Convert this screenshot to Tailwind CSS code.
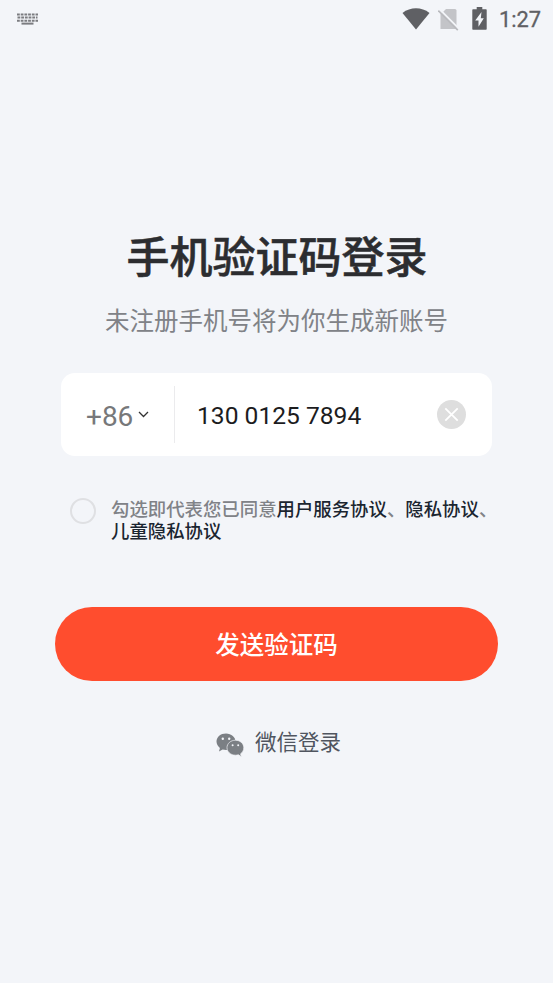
<!DOCTYPE html>
<html lang="zh-CN">
  <head>
    <meta charset="UTF-8" />
    <meta name="viewport" content="width=device-width, initial-scale=1.0" />
    <title>手机验证码登录</title>
    <script src="https://cdn.jsdelivr.net/npm/@tailwindcss/browser@4"></script>
  </head>
  <body class="min-h-screen bg-[#f3f5f9] font-['Noto_Sans_CJK_SC',sans-serif]">
    <!-- Status bar -->
    <header class="flex h-[38px] items-center justify-between pl-[17px] pr-[12px] text-[#5f6064]">
      <svg class="h-3 w-[21px]" viewBox="0 0 21 12" fill="none" stroke="#7b7c80" stroke-width="2">
        <path d="M0 1.5h21M0.5 4.6h20M0 7.7h21" stroke-dasharray="2.8 0.9" />
        <path d="M4.5 10.6h12" />
      </svg>
      <div class="flex items-center">
        <svg class="h-[22px] w-[28px]" viewBox="0 0 28 22" fill="#5f6064">
          <path d="M0.5 5C8.5-1.2 19.5-1.2 27.5 5L14 21.5z" />
        </svg>
        <svg class="ml-[8px] h-[23px] w-[21px]" viewBox="0 0 21 23">
          <path d="M8 1h9q1.500 0 1.500 1.500v18.500H2.500V6.500z" fill="#c3c4c8" />
          <path d="M1 0.800L21 20.800" stroke="#f3f5f9" stroke-width="2" />
          <path d="M0.300 2.700L19.800 22.200" stroke="#b9babe" stroke-width="1.700" />
        </svg>
        <svg class="mb-px ml-[13px] h-[23px] w-[15px]" viewBox="0 0 15 23">
          <path d="M1 2.200h3.700V0h5.600v2.200H14q0.700 0 0.700 0.700v19.200q0 0.700-0.700 0.700H1q-0.700 0-0.700-0.700V2.900q0-0.700 0.700-0.700z" fill="#5f6064" />
          <path d="M9.500 5L3.200 13.400H6.500V19.800L11.800 11.300H8.800z" fill="#f3f5f9" />
        </svg>
        <span class="ml-[12px] mt-px font-[Roboto,sans-serif] text-[21.800px] leading-6 [-webkit-text-stroke:0.3px]">1:27</span>
      </div>
    </header>

    <main class="flex flex-col items-center">
      <h1 class="ml-px mt-[186px] text-[43px] font-medium leading-[60px] text-[#2c2d30] [-webkit-text-stroke:0.5px]">手机验证码登录</h1>
      <p class="mt-[18px] text-[24.5px] leading-9 text-[#808287]">未注册手机号将为你生成新账号</p>

      <!-- Phone number -->
      <div class="mt-[35px] flex h-[83px] w-[431px] items-center rounded-[14px] bg-white pl-[25px] pr-[26px] font-[Roboto,sans-serif]">
        <button type="button" class="flex w-[88px] items-center">
          <span class="mt-[5px] text-[28px] leading-8 text-[#77787a]">+86</span>
          <svg class="ml-[5px] h-[7px] w-[11px]" viewBox="0 0 11 7" fill="none" stroke="#333" stroke-width="1.3">
            <path d="M1 1l4.500 4.500L10 1" />
          </svg>
        </button>
        <div class="h-[57px] w-px bg-[#ebebed]"></div>
        <span class="ml-[22px] mt-[2px] flex-1 text-[24.6px] leading-8 text-[#1c1c1e]">130 0125 7894</span>
        <svg class="h-[29px] w-[29px]" viewBox="0 0 29 29" fill="none">
          <circle cx="14.5" cy="14.5" r="14.5" fill="#dedede" />
          <path d="M8.3 8.3l12.400 12.400M20.700 8.300L8.300 20.700" stroke="#fff" stroke-width="1.8" />
        </svg>
      </div>

      <!-- Agreement -->
      <div class="mt-[42px] flex w-[413px]">
        <span class="h-[26px] w-[26px] shrink-0 rounded-full border-2 border-[#dfe0e3]"></span>
        <p class="-mt-px ml-[15px] whitespace-nowrap text-[18.4px] font-medium leading-[22px] text-[#808287]">
          勾选即代表您已同意<a class="text-[#1b2530]">用户服务协议</a>、<a class="text-[#1b2530]">隐私协议</a>、<br /><a class="text-[#1b2530]">儿童隐私协议</a>
        </p>
      </div>

      <button type="button" class="mt-[66px] h-[74px] w-[443px] rounded-full bg-[#ff4d2e] text-[24.5px] font-medium text-white">发送验证码</button>

      <!-- WeChat login -->
      <button type="button" class="ml-[4px] mt-[44px] flex items-center text-[21.5px] leading-8 text-[#50555f]">
        <svg class="mr-[11px] mt-[8px] h-[24px] w-[28px]" viewBox="0 0 28 24">
          <path d="M10 0.500C4.600 0.500 0.500 4 0.500 8.600c0 2.600 1.300 4.800 3.400 6.300L3 18.500l3.600-1.900c1.100.3 2.200.5 3.400.5 5.400 0 9.600-3.500 9.600-8.200S15.400.5 10 .5z" fill="#7b7f84" />
          <path d="M19.500 7.200c-4.800 0-8.500 3.300-8.500 7.500s3.700 7.500 8.500 7.500c1 0 2-.1 2.900-.4l3 1.900-.8-2.900c2-1.400 3.200-3.600 3.200-6.100 0-4.200-3.800-7.500-8.300-7.500z" fill="#7b7f84" stroke="#f3f5f9" stroke-width="0.7" />
          <g fill="#f3f5f9">
            <circle cx="6.800" cy="5.800" r="1.200" />
            <circle cx="13.200" cy="5.800" r="1.200" />
            <circle cx="16.600" cy="12.300" r="1" />
            <circle cx="22.200" cy="12.300" r="1" />
          </g>
        </svg>
        微信登录
      </button>
    </main>
  </body>
</html>
